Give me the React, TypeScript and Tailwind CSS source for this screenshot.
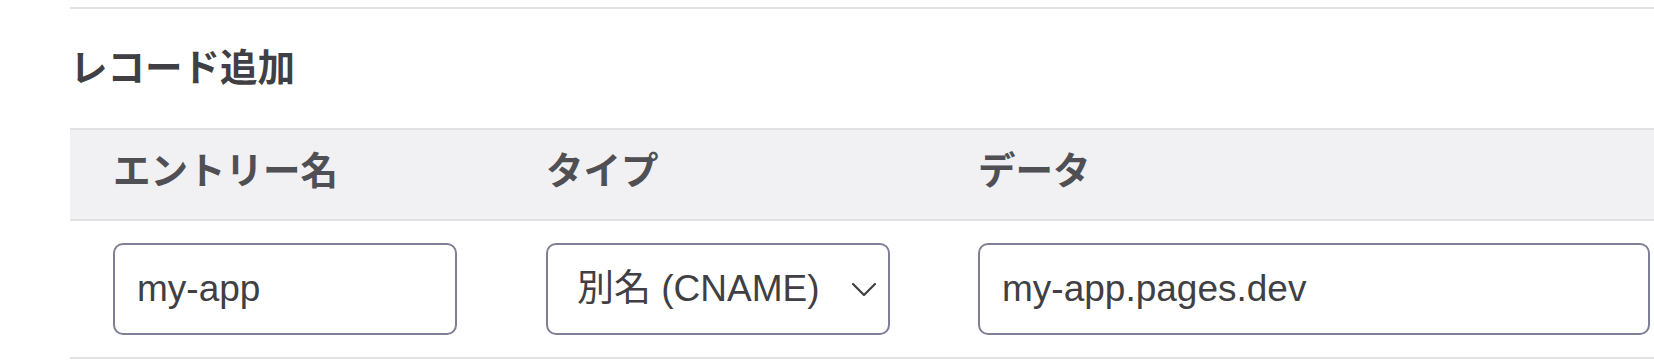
import React from 'react';

function Chevron() {
  return (
    <svg width="26" height="15" viewBox="0 0 26 15" fill="none" className="shrink-0">
      <path d="M2 2 L13 13 L24 2" stroke="#3f3f44" strokeWidth="2.2" strokeLinecap="round" strokeLinejoin="round" />
    </svg>
  );
}

const fieldBox = 'h-[92px] rounded-[10px] border-2 border-[#7f7f97] bg-white flex items-center text-[37px] text-[#3f3f44]';

export default function App() {
  return (
    <div className="w-[1654px] h-[363px] bg-white overflow-hidden font-['Liberation_Sans','Noto_Sans_CJK_JP',sans-serif]">
      <div className="ml-[70px] mt-[7px] border-t-2 border-[#e2e2e4]">
        <h2 className="h-[119px] flex items-center text-[37.5px] font-bold text-[#3f3f44] leading-none">レコード追加</h2>

        <div className="h-[93px] grid grid-cols-[433px_432px_1fr] items-center bg-[#f1f1f3] border-y-2 border-[#e2e2e4] text-[37.5px] font-bold text-[#4f4f54] leading-none">
          <div className="pl-[43px] pb-[6px]">エントリー名</div>
          <div className="pl-[43px] pb-[6px]">タイプ</div>
          <div className="pl-[43px] pb-[6px]">データ</div>
        </div>

        <div className="h-[138px] grid grid-cols-[433px_432px_1fr] items-center border-b-2 border-[#e2e2e4]">
          <div className="pl-[43px]">
            <div className={`${fieldBox} w-[344px] pl-[22px]`}>my-app</div>
          </div>
          <div className="pl-[43px]">
            <div className={`${fieldBox} w-[344px] pl-[29px] pr-[11px] justify-between`}>
              <span>別名 (CNAME)</span>
              <Chevron />
            </div>
          </div>
          <div className="pl-[43px]">
            <div className={`${fieldBox} w-[672px] pl-[22px]`}>my-app.pages.dev</div>
          </div>
        </div>
      </div>
    </div>
  );
}
